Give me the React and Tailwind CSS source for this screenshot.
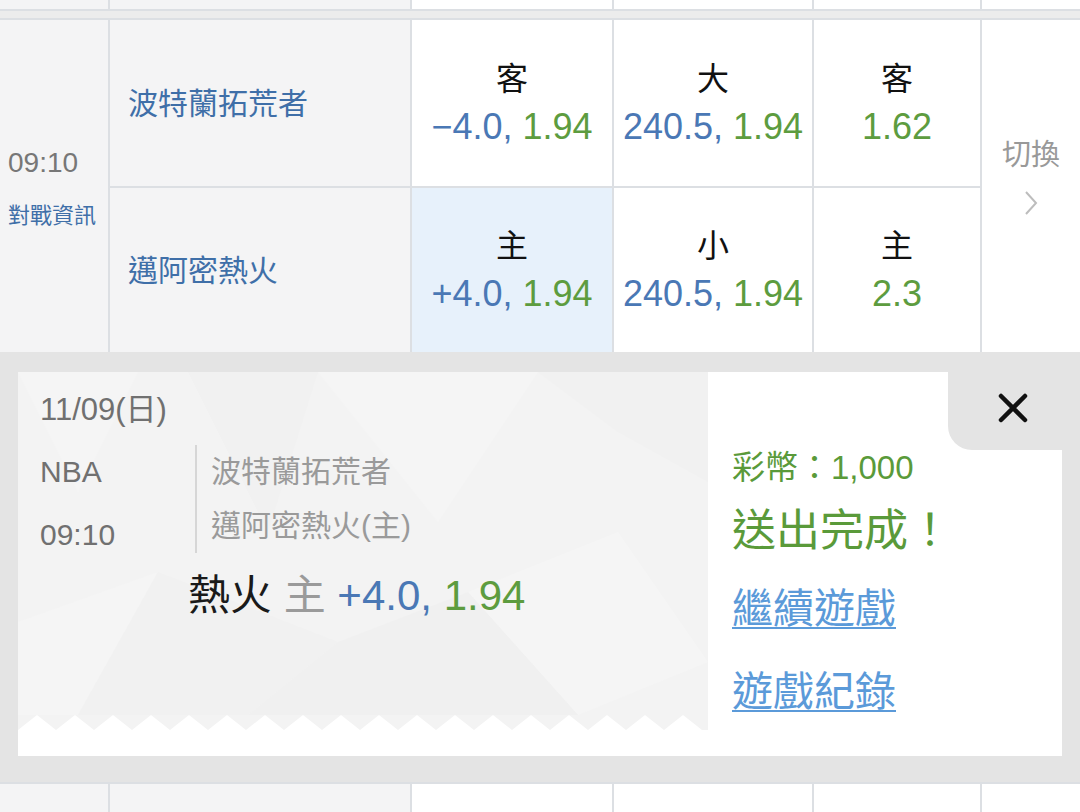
import React from "react";

const FONT = "font-['Liberation_Sans','Noto_Sans_CJK_TC',sans-serif]";

function StubRow({ height }) {
  return (
    <div className={`flex ${height}`}>
      <div className="w-[110px] border-r-2 border-[#dcdfe3] bg-[#f4f4f5]" />
      <div className="w-[302px] border-r-2 border-[#dcdfe3] bg-[#f4f4f5]" />
      <div className="w-[202px] border-r-2 border-[#dcdfe3] bg-white" />
      <div className="w-[200px] border-r-2 border-[#dcdfe3] bg-white" />
      <div className="w-[168px] border-r-2 border-[#dcdfe3] bg-white" />
      <div className="w-[98px] bg-white" />
    </div>
  );
}

function Odds({ label, line, price, width, selected }) {
  return (
    <div
      className={`${width} flex flex-col items-center justify-center border-r-2 border-[#dcdfe3] ${
        selected ? "bg-[#e7f1fb]" : "bg-white"
      }`}
    >
      <div className="text-[32px] leading-[48px] text-[#111]">{label}</div>
      <div className="text-[36px] leading-[48px]">
        {line && <span className="text-[#4a78b5]">{line}, </span>}
        <span className="text-[#5d9c3f]">{price}</span>
      </div>
    </div>
  );
}

function TeamRow({ team, hcp, ou, ml, selected, top }) {
  return (
    <div className={`flex h-[166px] ${top ? "" : "border-t-2 border-[#dcdfe3]"}`}>
      <div className="flex w-[302px] items-center border-r-2 border-[#dcdfe3] bg-[#f4f4f5] pl-[18px] text-[30px] text-[#3f6fa8]">
        {team}
      </div>
      <Odds width="w-[202px]" selected={selected} {...hcp} />
      <Odds width="w-[200px]" {...ou} />
      <Odds width="w-[168px]" {...ml} />
    </div>
  );
}

function zigzag() {
  const pts = ["0,0", "0,15"];
  for (let x = 19; x <= 690; x += 38) {
    pts.push(`${x},0`);
    pts.push(`${Math.min(x + 19, 690)},15`);
  }
  pts.push("690,15", "690,0");
  return pts.join(" ");
}

function Ticket() {
  return (
    <div className="flex w-[690px] flex-col">
      <div className="relative h-[343px] overflow-hidden bg-[#f3f3f3] pl-[22px] pt-[18px]">
        <svg className="absolute inset-0" width="690" height="343" viewBox="0 0 690 343">
          <polygon points="0,0 120,0 60,120" fill="#f5f5f5" />
          <polygon points="170,0 300,0 250,160" fill="#f1f1f1" />
          <polygon points="300,0 520,0 420,150" fill="#f5f5f5" />
          <polygon points="520,0 690,0 690,110 600,60" fill="#f1f1f1" />
          <polygon points="0,250 140,200 60,343 0,343" fill="#f5f5f5" />
          <polygon points="140,200 320,270 230,343 60,343" fill="#f1f1f1" />
          <polygon points="450,220 600,160 690,290 560,343" fill="#f5f5f5" />
          <polygon points="320,270 450,220 560,343 230,343" fill="#f0f0f0" />
        </svg>
        <div className="relative">
          <div className="text-[31px] leading-[40px] text-[#707070]">11/09(日)</div>
          <div className="mt-[15px] flex">
            <div className="w-[155px] text-[30px] text-[#707070]">
              <div className="leading-[54px]">NBA</div>
              <div className="mt-[9px] leading-[54px]">09:10</div>
            </div>
            <div className="h-[108px] border-l-2 border-[#d6d6d6] pl-[14px] text-[30px] text-[#9a9a9a]">
              <div className="leading-[54px]">波特蘭拓荒者</div>
              <div className="leading-[54px]">邁阿密熱火(主)</div>
            </div>
          </div>
          <div className="ml-[148px] mt-[6px] text-[42px] leading-[56px]">
            <span className="text-[#1a1a1a]">熱火</span>
            <span className="text-[#9a9a9a]"> 主 </span>
            <span className="text-[#4a78b5]">+4.0, </span>
            <span className="text-[#5d9c3f]">1.94</span>
          </div>
        </div>
      </div>
      <svg width="690" height="15" viewBox="0 0 690 15" className="block">
        <polygon points={zigzag()} fill="#f3f3f3" />
      </svg>
    </div>
  );
}

export default function App() {
  return (
    <div className={`h-[812px] w-[1080px] overflow-hidden bg-white ${FONT}`}>
      <StubRow height="h-[9px]" />
      <div className="h-[11px] border-y-2 border-[#dcdfe3] bg-[#ececec]" />

      <div className="flex h-[332px]">
        <div className="flex w-[110px] flex-col justify-center border-r-2 border-[#dcdfe3] bg-[#f4f4f5] pl-[8px]">
          <div className="text-[28px] leading-[40px] text-[#777]">09:10</div>
          <div className="mt-[20px] text-[22px] leading-[26px] text-[#3f6fa8]">對戰資訊</div>
        </div>
        <div className="flex w-[872px] flex-col">
          <TeamRow
            top
            team="波特蘭拓荒者"
            hcp={{ label: "客", line: "−4.0", price: "1.94" }}
            ou={{ label: "大", line: "240.5", price: "1.94" }}
            ml={{ label: "客", price: "1.62" }}
          />
          <TeamRow
            team="邁阿密熱火"
            selected
            hcp={{ label: "主", line: "+4.0", price: "1.94" }}
            ou={{ label: "小", line: "240.5", price: "1.94" }}
            ml={{ label: "主", price: "2.3" }}
          />
        </div>
        <div className="flex w-[98px] flex-col items-center justify-center bg-white pb-[21px]">
          <div className="text-[29px] leading-[40px] text-[#999]">切換</div>
          <svg width="16" height="26" viewBox="0 0 16 26" className="mt-[15px]">
            <polyline points="3,2 13,13 3,24" fill="none" stroke="#bdbdbd" strokeWidth="2" />
          </svg>
        </div>
      </div>

      <div className="bg-[#e4e4e4] px-[18px] pb-[26px] pt-[20px]">
        <div className="flex h-[384px] bg-white">
          <Ticket />
          <div className="flex flex-1 flex-col">
            <div className="flex justify-end">
              <div className="flex h-[78px] w-[114px] items-center justify-center rounded-bl-[24px] bg-[#e4e4e4] pb-[6px] pl-[16px]">
                <svg width="30" height="30" viewBox="0 0 30 30">
                  <path d="M3 3 L27 27 M27 3 L3 27" stroke="#111" strokeWidth="4.5" strokeLinecap="round" />
                </svg>
              </div>
            </div>
            <div className="pl-[24px]">
              <div className="text-[33px] leading-[36px] text-[#5a9a3a]">彩幣：1,000</div>
              <div className="mt-[20px] text-[44px] leading-[50px] text-[#5a9a3a]">送出完成！</div>
              <div className="mt-[28px] text-[41px] leading-[50px]">
                <a className="text-[#5b9ad9] underline decoration-2 underline-offset-4">繼續遊戲</a>
              </div>
              <div className="mt-[33px] text-[41px] leading-[50px]">
                <a className="text-[#5b9ad9] underline decoration-2 underline-offset-4">遊戲紀錄</a>
              </div>
            </div>
          </div>
        </div>
      </div>

      <div className="border-t-2 border-[#dcdfe3]">
        <StubRow height="h-[40px]" />
      </div>
    </div>
  );
}
